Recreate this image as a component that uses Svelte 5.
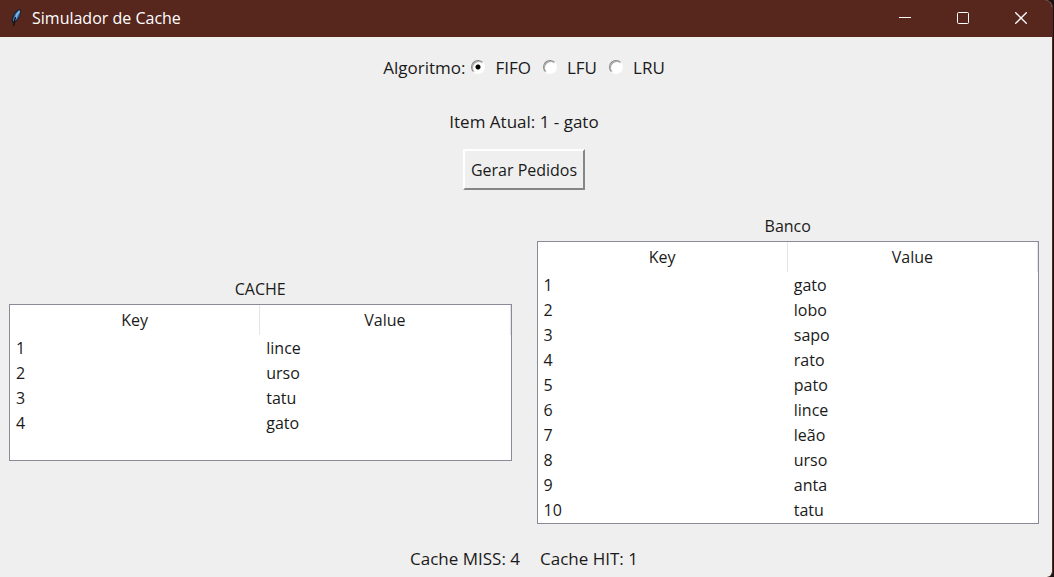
<script>
  const algorithms = ['FIFO', 'LFU', 'LRU'];
  let algorithm = $state('FIFO');

  const cache = ['lince', 'urso', 'tatu', 'gato'];
  const bank = ['gato', 'lobo', 'sapo', 'rato', 'pato', 'lince', 'leão', 'urso', 'anta', 'tatu'];
</script>

{#snippet listing(title, rows, cls)}
  <section class="panel">
    <h2 id={cls}>{title}</h2>
    <div class="tree {cls}">
      <table aria-labelledby={cls}>
        <thead>
          <tr><th>Key</th><th>Value</th></tr>
        </thead>
        <tbody>
          {#each rows as value, i}
            <tr><td>{i + 1}</td><td>{value}</td></tr>
          {/each}
        </tbody>
      </table>
    </div>
  </section>
{/snippet}

<div class="desktop">
  <div class="window">
    <header class="titlebar">
      <svg class="feather" width="12" height="20" viewBox="0 0 12 20" aria-hidden="true">
        <path d="M11 1 C6 1 2 6 1.5 13 L2.500 15.5 L6 14 C9.5 10 11.5 6 11 1Z" fill="#1c2530" />
        <path d="M10 2 C6 3.5 3 8 3 13 L5 13.5 C8.5 10 10.5 6 10 2Z" fill="#3f79b8" />
        <path d="M9.5 3 C7.5 5 6 8 5 11.5" fill="none" stroke="#8fbce6" stroke-width="1.6" />
        <path d="M5.5 9 L3.5 18" stroke="#15100f" stroke-width="1.3" />
      </svg>
      <h1>Simulador de Cache</h1>
      <div class="controls">
        <button type="button" aria-label="Minimizar">
          <svg width="12" height="12" viewBox="0 0 12 12"><path d="M0 5.5H12" /></svg>
        </button>
        <button type="button" aria-label="Maximizar">
          <svg width="12" height="12" viewBox="0 0 12 12"><rect x=".5" y=".5" width="11" height="11" rx="1" /></svg>
        </button>
        <button type="button" aria-label="Fechar">
          <svg width="12" height="12" viewBox="0 0 12 12"><path class="cross" d="M.3 .3L11.7 11.7M11.7 .3L.3 11.7" /></svg>
        </button>
      </div>
    </header>

    <main>
      <div class="options" role="radiogroup" aria-labelledby="algo">
        <span id="algo">Algoritmo:</span>
        {#each algorithms as name}
          <label><input type="radio" name="algorithm" value={name} bind:group={algorithm} />{name}</label>
        {/each}
      </div>

      <p class="current">Item Atual: 1 - gato</p>
      <button type="button" class="generate">Gerar Pedidos</button>

      <div class="panels">
        {@render listing('CACHE', cache, 'cache')}
        {@render listing('Banco', bank, 'bank')}
      </div>

      <footer><span>Cache MISS: 4</span><span>Cache HIT: 1</span></footer>
    </main>
  </div>
</div>

<style>
  :global(body) {
    margin: 0;
  }

  .desktop {
    min-height: 100vh;
    padding-right: 1px;
    box-sizing: border-box;
    display: flex;
    background: #1c1213;
    color: #1a1a1a;
    font: 16px/24px 'Open Sans', 'Noto Sans', sans-serif;
  }

  .window {
    flex: 1;
    display: flex;
    flex-direction: column;
    overflow: hidden;
    border-right: 1px solid #57271e;
    border-radius: 0 8px 6px 0;
    background: #efefef;
  }

  .titlebar {
    display: flex;
    align-items: center;
    height: 37px;
    padding: 0 2px 2px 10px;
    box-sizing: border-box;
    background: #57271e;
    color: #fff;
  }

  h1,
  h2,
  p {
    margin: 0;
    font-size: 16px;
    font-weight: 400;
  }

  h1 {
    margin-left: 10px;
  }

  .controls {
    display: flex;
    align-self: stretch;
    margin-left: auto;
  }

  .controls button {
    display: grid;
    place-items: center;
    width: 58px;
    padding: 0;
    border: 0;
    background: none;
  }

  .controls svg {
    fill: none;
    stroke: #fff;
  }

  .cross {
    stroke-width: 1.3;
  }

  main {
    flex: 1;
    display: flex;
    flex-direction: column;
    align-items: center;
    padding: 19px 13px 0 9px;
  }

  .options {
    display: flex;
    align-items: center;
    gap: 12px;
  }

  .options,
  .current,
  footer {
    font-size: 17px;
  }

  .options span {
    margin-right: -6px;
  }

  label {
    display: flex;
    align-items: center;
    gap: 10px;
  }

  input {
    appearance: none;
    width: 14px;
    height: 14px;
    margin: 0 0 3px;
    border: 1px solid;
    border-color: #858585 #fff #fff #858585;
    border-radius: 50%;
    background: #fff;
    box-shadow: inset 1px 1px 0 #aaa;
  }

  input:checked {
    background: radial-gradient(circle, #000 2px, #fff 3px);
  }

  .current {
    margin-top: 30px;
  }

  .generate {
    height: 41px;
    margin-top: 15px;
    padding: 0 6px;
    border: 2px solid;
    border-color: #fff #868686 #868686 #fff;
    background: #efefef;
    color: inherit;
    font: inherit;
  }

  .panels {
    display: flex;
    align-items: center;
    align-self: stretch;
    gap: 25px;
    margin-top: 24px;
  }

  .panel {
    flex: 1;
  }

  h2 {
    margin-bottom: 3px;
    text-align: center;
  }

  .tree {
    border: 1px solid #898c98;
    background: #fff;
  }

  .cache {
    min-height: 155px;
  }

  .bank {
    min-height: 281px;
  }

  table {
    width: 100%;
    table-layout: fixed;
    border-collapse: separate;
    border-spacing: 0;
  }

  th,
  td {
    height: 25px;
    padding: 0 6px;
    font-weight: 400;
    line-height: 24px;
    text-align: left;
  }

  th {
    height: 30px;
    border-right: 1px solid #e5e5e5;
    text-align: center;
  }

  footer {
    display: flex;
    gap: 20px;
    margin-top: 23px;
  }
</style>
